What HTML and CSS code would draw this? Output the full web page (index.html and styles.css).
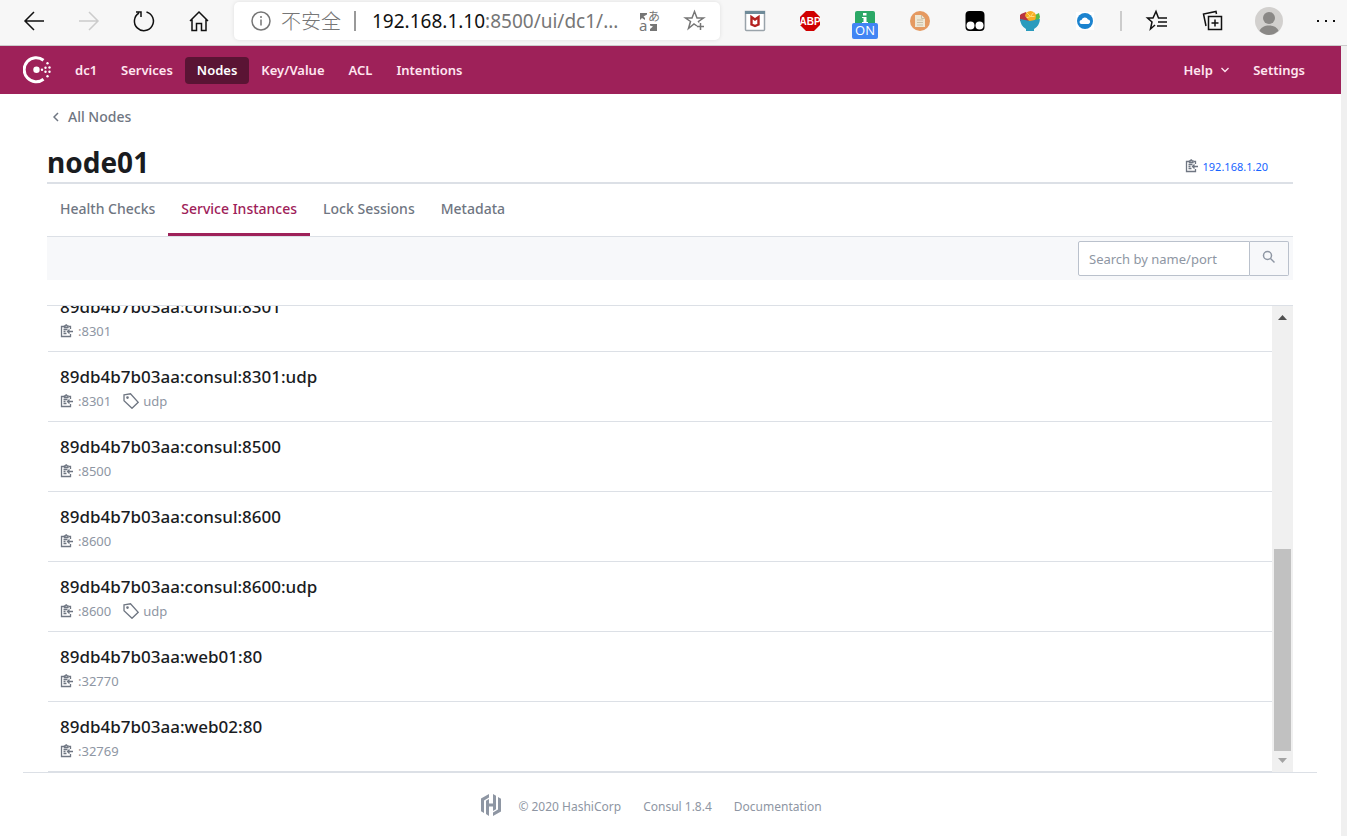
FILE: index.html
```html
<!DOCTYPE html>
<html lang="en">
  <head>
    <meta charset="UTF-8" />
    <meta name="viewport" content="width=device-width, initial-scale=1.0" />
    <title>node01 - Consul</title>
    <link rel="stylesheet" href="styles.css" />
  </head>

  <body>
    <svg class="sprite" aria-hidden="true">
      <symbol id="copy" viewBox="0 0 14 14">
        <path d="M4 2.500H1.500v10h9V10M8.500 2.500H10.500V5" />
        <path d="M4.500 3.500V1.800h1l.5-1h.5l.5 1h1v1.700zM3.500 5.500h4M3.500 7.500h2M3.500 9.500h3M13 7.500H7.500M9.500 5.500l-2 2 2 2" />
      </symbol>
      <symbol id="tag" viewBox="0 0 16 16">
        <path d="M1 1.800L7.500.8 15.200 9.300 9 15.300 1 7.800z" />
        <circle cx="4.500" cy="4.600" r=".7" />
      </symbol>
    </svg>

    <div class="browser">
      <button class="tool" aria-label="Back">
        <svg width="22" height="22" viewBox="0 0 22 22"><path d="M21 11H2M11 2l-9 9 9 9" /></svg>
      </button>
      <button class="tool off" aria-label="Forward" disabled>
        <svg width="22" height="22" viewBox="0 0 22 22"><path d="M1 11h19M11 2l9 9-9 9" /></svg>
      </button>
      <button class="tool" aria-label="Refresh">
        <svg width="22" height="22" viewBox="0 0 22 22"><path d="M13.500 2A9.500 9.500 0 1 1 6 3M3 2h5v5" /></svg>
      </button>
      <button class="tool" aria-label="Home">
        <svg width="22" height="22" viewBox="0 0 22 22"><path d="M2 11l9-9 9 9M4 9v11.500h4.500v-7h5v7H18V9" /></svg>
      </button>

      <div class="address">
        <svg class="info" width="20" height="20" viewBox="0 0 20 20"><circle cx="10" cy="10" r="9" /><path d="M10 8.500v6M10 5v2" /></svg>
        <span class="unsafe">不安全</span>
        <span class="bar"></span>
        <span class="url"><b>192.168.1.10</b>:8500/ui/dc1/...</span>
        <svg class="translate" width="20" height="20" viewBox="0 0 20 20">
          <path d="M1 2v7l2-2 3 2V7L4.500 5.500 8 3.500V2zM18 20v-7h-7v1.500l3 1-3 2.500v2z" />
          <text x="0" y="20">a</text>
          <text x="9" y="10" class="kana">あ</text>
        </svg>
        <svg class="star" width="22" height="22" viewBox="0 0 22 22"><path d="M13 16l-3-2-5.500 4.500 2-7L1.500 8h6.500L10.500 1.500 13 8h6.500l-5 3.500.5 1M16.500 13v7M13 16.500h7" /></svg>
      </div>

      <button class="tool" aria-label="McAfee">
        <svg width="20" height="20" viewBox="0 0 20 20">
          <path d="M.5.500h19v18a1 1 0 0 1-1 1h-17a1 1 0 0 1-1-1z" fill="#fff" stroke="#9aa3aa" />
          <path d="M0 0h20v3H0z" fill="#6f8b99" stroke="none" />
          <path d="M6.500 6v7.500l3.500 1.500 3.500-1.500V6L10 8.500z" fill="none" stroke="#b3211f" stroke-width="2.400" />
        </svg>
      </button>
      <button class="tool" aria-label="Adblock Plus">
        <svg width="20" height="20" viewBox="0 0 20 20">
          <path d="M6 0h8l6 6v8l-6 6H6l-6-6V6z" fill="#d00000" stroke="none" />
          <text x="10" y="14" class="abp">ABP</text>
        </svg>
      </button>
      <button class="tool" aria-label="Switch">
        <svg width="26" height="20" viewBox="0 0 26 20">
          <path d="M5 0h16a2 2 0 0 1 2 2v12H3V2a2 2 0 0 1 2-2z" fill="#2ba866" stroke="none" />
          <path d="M11 2h3.500v2.500H11zM10 6h4.500v5H16v1H10v-1h1.500V7H10z" fill="#fff" stroke="none" />
          <rect y="12" width="26" height="16" rx="2" fill="#4285f4" stroke="none" />
          <text x="13" y="24" class="on">ON</text>
        </svg>
      </button>
      <button class="tool" aria-label="Page notes">
        <svg width="20" height="20" viewBox="0 0 20 20">
          <circle cx="10" cy="10" r="10" fill="#e59a61" stroke="none" />
          <path d="M5 4h6.500L15 7.500V16H5z" fill="#eee7d5" stroke="none" />
          <path d="M11.500 4v3.500H15M7 9h6M7 11.500h6M7 14h6" stroke="#c9bfa6" stroke-width="1" />
        </svg>
      </button>
      <button class="tool" aria-label="Tampermonkey">
        <svg width="20" height="20" viewBox="0 0 20 20">
          <rect x=".5" width="19" height="20" rx="4" fill="#000" stroke="none" />
          <circle cx="5.500" cy="14.500" r="4" fill="#fff" stroke="none" />
          <circle cx="14.500" cy="14.500" r="4" fill="#fff" stroke="none" />
        </svg>
      </button>
      <button class="tool" aria-label="Fruit">
        <svg width="20" height="20" viewBox="0 0 20 20">
          <path d="M0 10L1 3l5-2 4 10z" fill="#b9343f" stroke="none" />
          <path d="M12 11l3-7 4-2 1 4-2 5z" fill="#55b947" stroke="none" />
          <circle cx="10.500" cy="5.500" r="5.500" fill="#f8ad22" stroke="none" />
          <path d="M10.500 5.500L7 2M10.500 5.500l3-4M10.500 5.500L6 7M10.500 5.500h4" stroke="#ffdc78" stroke-width="1" />
          <path d="M0 3.500L5 5l4 5H0z" fill="#b9343f" stroke="none" />
          <path d="M0 8l10 2 10-2q-.5 7-6 10v2H6v-2Q.5 15 0 8z" fill="#2b9bbd" stroke="none" />
        </svg>
      </button>
      <button class="tool" aria-label="Cloud">
        <svg width="18" height="18" viewBox="0 0 18 18">
          <rect width="18" height="18" fill="#fff" stroke="none" />
          <circle cx="9" cy="9" r="8" fill="#1b83cf" stroke="none" />
          <path d="M5.500 12a2 2 0 0 1 0-4 3.500 3.500 0 0 1 6.500-.5 2.300 2.300 0 0 1 .5 4.500z" fill="#fff" stroke="none" />
        </svg>
      </button>
      <span class="split"></span>
      <button class="tool wide" aria-label="Favorites">
        <svg width="22" height="22" viewBox="0 0 22 22"><path d="M9 15l-4.500 4 1.500-7L1.500 8H7l3-6.500L12.500 8H21M12 12h9M11 16h10" /></svg>
      </button>
      <button class="tool wide" aria-label="Collections">
        <svg width="22" height="22" viewBox="0 0 22 22"><path d="M6.500 6.500h13v13h-13zM13 9.500v7M9.500 13h7M4 16L1.500 4 14 1.500 14.500 4" /></svg>
      </button>
      <button class="tool wide" aria-label="Profile">
        <svg width="28" height="28" viewBox="0 0 28 28">
          <circle cx="14" cy="14" r="14" fill="#d2d0ce" stroke="none" />
          <circle cx="14" cy="11" r="6" fill="#8a8886" stroke="none" />
          <path d="M4.500 24c2-7.500 17-7.500 19 0q-9.500 8-19 0z" fill="#8a8886" stroke="none" />
        </svg>
      </button>
      <button class="tool more" aria-label="More">
        <svg width="20" height="4" viewBox="0 0 20 4"><path d="M1 1h2v2H1zM9 1h2v2H9zM17 1h2v2h-2z" fill="#111" stroke="none" /></svg>
      </button>
    </div>

    <div class="page">
      <header class="header">
        <a class="logo" href="#" aria-label="Consul">
          <svg width="28" height="28" viewBox="0 0 28 28">
            <path d="M20.500 4.200A12 12 0 1 0 20.500 23.200" fill="none" stroke="#fff" stroke-width="3" />
            <circle cx="13.500" cy="13.700" r="3.200" />
            <circle cx="19" cy="13.700" r="1.200" />
            <circle cx="22.500" cy="11.700" r="1.200" />
            <circle cx="22.500" cy="15.700" r="1.200" />
            <circle cx="26.500" cy="11.500" r="1.200" />
            <circle cx="26.500" cy="15.700" r="1.200" />
            <circle cx="24.500" cy="7.200" r="1.200" />
            <circle cx="24.500" cy="20.200" r="1.200" />
          </svg>
        </a>
        <nav class="nav">
          <a href="#">dc1</a>
          <a href="#">Services</a>
          <a class="active" href="#">Nodes</a>
          <a href="#">Key/Value</a>
          <a href="#">ACL</a>
          <a href="#">Intentions</a>
        </nav>
        <nav class="nav">
          <a href="#">Help
            <svg class="chevron" width="8" height="8" viewBox="0 0 8 8"><path d="M.5 1L4 4.500 7.500 1" /></svg>
          </a>
          <a href="#">Settings</a>
        </nav>
      </header>

      <main class="content">
        <a class="back" href="#">
          <svg width="6" height="10" viewBox="0 0 6 10"><path d="M5 1L1 5l4 4" /></svg>
          All Nodes
        </a>
        <div class="title">
          <h1>node01</h1>
          <a class="ip" href="#"><svg class="icon" width="14" height="14"><use href="#copy" /></svg>192.168.1.20</a>
        </div>
        <nav class="tabs">
          <a href="#">Health Checks</a>
          <a class="selected" href="#">Service Instances</a>
          <a href="#">Lock Sessions</a>
          <a href="#">Metadata</a>
        </nav>
        <form class="search">
          <input type="search" aria-label="Search" placeholder="Search by name/port" />
          <button type="button" aria-label="Submit search">
            <svg width="14" height="14" viewBox="0 0 14 14"><circle cx="5.500" cy="5.500" r="4" /><path d="M8.500 8.500l4 4" /></svg>
          </button>
        </form>

        <div class="panel">
          <ul class="list">
            <li>
              <a href="#">89db4b7b03aa:consul:8301</a>
              <div class="meta"><svg class="icon" width="14" height="14"><use href="#copy" /></svg>:8301</div>
            </li>
            <li>
              <a href="#">89db4b7b03aa:consul:8301:udp</a>
              <div class="meta"><svg class="icon" width="14" height="14"><use href="#copy" /></svg>:8301 <svg class="icon tag" width="16" height="16"><use href="#tag" /></svg>udp</div>
            </li>
            <li>
              <a href="#">89db4b7b03aa:consul:8500</a>
              <div class="meta"><svg class="icon" width="14" height="14"><use href="#copy" /></svg>:8500</div>
            </li>
            <li>
              <a href="#">89db4b7b03aa:consul:8600</a>
              <div class="meta"><svg class="icon" width="14" height="14"><use href="#copy" /></svg>:8600</div>
            </li>
            <li>
              <a href="#">89db4b7b03aa:consul:8600:udp</a>
              <div class="meta"><svg class="icon" width="14" height="14"><use href="#copy" /></svg>:8600 <svg class="icon tag" width="16" height="16"><use href="#tag" /></svg>udp</div>
            </li>
            <li>
              <a href="#">89db4b7b03aa:web01:80</a>
              <div class="meta"><svg class="icon" width="14" height="14"><use href="#copy" /></svg>:32770</div>
            </li>
            <li>
              <a href="#">89db4b7b03aa:web02:80</a>
              <div class="meta"><svg class="icon" width="14" height="14"><use href="#copy" /></svg>:32769</div>
            </li>
          </ul>
          <div class="scrollbar">
            <svg width="9" height="5" viewBox="0 0 9 5"><path d="M0 5L4.500 0 9 5z" fill="#505050" /></svg>
            <span class="thumb"></span>
            <svg width="9" height="5" viewBox="0 0 9 5"><path d="M0 0l4.500 5L9 0z" fill="#a3a3a3" /></svg>
          </div>
        </div>
      </main>

      <footer class="footer">
        <svg width="20" height="22" viewBox="0 0 20 22">
          <path d="M8 0L0 4.500v12.800l3 1.700V6.500l5-3zM12 0v9.500H8V5L5 6.800V20l3 2v-9.500h4V17l3-1.800V1.700z" />
          <path d="M17 3v12.500l-5 3V22l8-4.500V4.700z" />
        </svg>
        <span>© 2020 HashiCorp</span>
        <span>Consul 1.8.4</span>
        <a href="#">Documentation</a>
      </footer>
    </div>
  </body>
</html>
```
FILE: styles.css
```css
* {
  box-sizing: border-box;
}

body {
  margin: 0;
  height: 100vh;
  display: flex;
  flex-direction: column;
  overflow: hidden;
  background-color: #fff;
  color: #1a1c1f;
  font-family: "Noto Sans", "Noto Sans CJK SC", sans-serif;
  font-size: 14px;
}

a {
  color: inherit;
  text-decoration: none;
}

button {
  border: 0;
  padding: 0;
  background: none;
  cursor: pointer;
}

.sprite {
  display: none;
}

/* Browser toolbar */
.browser {
  display: flex;
  align-items: center;
  height: 46px;
  padding: 0 0 4px 6px;
  background-color: #f7f7f7;
  border-bottom: 1px solid #ccc;
}

.tool {
  flex: none;
  display: flex;
  align-items: center;
  justify-content: center;
  width: 55px;
  height: 41px;
}

.tool svg {
  flex: none;
  overflow: visible;
  fill: none;
  stroke: #111;
  stroke-width: 1.5;
}

.tool.off svg {
  stroke: #ccc;
}

.tool.wide {
  width: 56px;
}

.tool.more {
  width: 50px;
  padding-left: 8px;
}

.tool text {
  stroke: none;
  fill: #fff;
  text-anchor: middle;
}

.tool .abp {
  font: bold 10px "Liberation Sans", sans-serif;
}

.tool .on {
  font: 13px "Open Sans", sans-serif;
}

.split {
  width: 2px;
  height: 20px;
  margin: 0 7px 0 8px;
  background-color: #ccc;
}

.address {
  flex: 1;
  min-width: 0;
  display: flex;
  align-items: center;
  height: 38px;
  margin: 0 7px 0 8px;
  padding: 0 14px 0 17px;
  background-color: #fff;
  border-radius: 5px;
  box-shadow: 0 0 4px rgba(0, 0, 0, 0.1);
  color: #767676;
  font-size: 20px;
}

.address svg {
  flex: none;
  overflow: visible;
  fill: none;
  stroke: #767676;
  stroke-width: 1.5;
}

.unsafe {
  margin-left: 10px;
  font-family: "Noto Sans CJK SC", sans-serif;
  font-weight: 300;
}

.bar {
  width: 2px;
  height: 20px;
  margin: 0 16px 0 13px;
  background-color: #999;
}

.url {
  flex: 1;
  white-space: nowrap;
  font-size: 19px;
}

.url b {
  color: #111;
  font-weight: normal;
}

.address .translate {
  margin-right: 25px;
  fill: #767676;
  stroke: none;
}

.translate text {
  font-size: 15px;
}

.translate .kana {
  font-family: "Noto Sans CJK JP", sans-serif;
  font-size: 12px;
}

/* Page */
.page {
  flex: 1;
  min-height: 0;
  display: flex;
  flex-direction: column;
  border-right: 6px solid #f0f0f0;
}

.header {
  display: flex;
  align-items: center;
  height: 48px;
  padding: 0 24px 0 23px;
  background-color: #9e2159;
}

.logo {
  display: flex;
  margin-right: 12px;
}

.logo svg {
  fill: #fff;
}

.nav {
  display: flex;
}

.nav + .nav {
  margin-left: auto;
}

.nav a {
  padding: 3px 12px;
  border-radius: 4px;
  color: #ffe6f0;
  font-size: 13px;
  font-weight: 600;
  line-height: 21px;
}

.nav .active {
  background-color: #5a1434;
  color: #fff;
}

.chevron {
  margin-left: 5px;
  fill: none;
  stroke: #ffe6f0;
  stroke-width: 1.3;
}

.content {
  flex: 1;
  min-height: 0;
  display: flex;
  flex-direction: column;
  padding: 12px 48px 0 47px;
}

.back {
  display: flex;
  align-items: center;
  gap: 9px;
  padding-left: 6px;
  color: #6f7682;
  font-size: 14px;
  font-weight: 500;
  line-height: 22px;
}

.back svg {
  fill: none;
  stroke: #6f7682;
  stroke-width: 1.5;
}

.title {
  display: flex;
  align-items: center;
  justify-content: space-between;
  height: 56px;
  padding: 14px 25px 0 0;
  border-bottom: 2px solid #dce0e6;
}

h1 {
  margin: 0;
  font-size: 28px;
  font-weight: 700;
  line-height: 40px;
}

.ip {
  display: flex;
  align-items: center;
  gap: 4px;
  padding-top: 8px;
  color: #1563ff;
  font-size: 11px;
}

.icon {
  flex: none;
  fill: none;
  stroke: #6f7682;
  stroke-width: 1.3;
}

.tabs {
  display: flex;
  border-bottom: 1px solid #dce0e6;
}

.tabs a {
  padding: 14px 13px 13px;
  border-bottom: 3px solid transparent;
  color: #6f7682;
  font-size: 14px;
  font-weight: 500;
  line-height: 22px;
}

.tabs .selected {
  border-color: #9e2159;
  color: #9e2159;
}

.search {
  display: flex;
  justify-content: flex-end;
  padding: 4px;
  background-color: #f7f8fa;
}

.search input {
  width: 172px;
  height: 35px;
  padding: 0 10px;
  border: 1px solid #bac1cc;
  border-radius: 2px 0 0 2px;
  background-color: #fff;
  color: #1f2124;
  font-family: inherit;
  font-size: 13px;
}

.search input::placeholder {
  color: #8e96a3;
}

.search button {
  width: 39px;
  border: 1px solid #bac1cc;
  border-left: 0;
  border-radius: 0 2px 2px 0;
}

.search svg {
  fill: none;
  stroke: #8e96a3;
  stroke-width: 1.5;
}

.panel {
  flex: 1;
  min-height: 0;
  display: flex;
  margin-top: 25px;
  border-top: 1px solid #dce0e6;
}

/* Scrolled to the end, so the first row is cut off at the top */
.list {
  flex: 1;
  display: flex;
  flex-direction: column;
  justify-content: flex-end;
  margin: 0;
  padding: 0 0 0 1px;
  overflow: hidden;
  list-style: none;
}

.list li {
  flex: none;
  padding: 13px 12px 8px;
  border-bottom: 1px solid #dce0e6;
}

.list a {
  display: block;
  font-size: 17px;
  font-weight: 500;
  line-height: 24px;
}

.meta {
  display: flex;
  align-items: center;
  gap: 4px;
  color: #8e96a3;
  font-size: 13px;
  line-height: 24px;
}

.meta .tag {
  margin-left: 8px;
}

.scrollbar {
  flex: none;
  display: flex;
  flex-direction: column;
  align-items: center;
  width: 21px;
  padding: 9px 0;
  background-color: #f0f0f0;
}

.thumb {
  width: 17px;
  height: 202px;
  margin: auto 0 7px;
  background-color: #c1c1c1;
}

.footer {
  display: flex;
  align-items: center;
  justify-content: center;
  gap: 22px;
  height: 64px;
  margin: 0 24px 0 23px;
  padding: 4px 37px 0 0;
  border-top: 1px solid #dce0e6;
  color: #8e96a3;
  font-size: 12px;
}

.footer svg {
  margin: 0 -5px 4px 0;
  fill: #8e96a3;
}
```
